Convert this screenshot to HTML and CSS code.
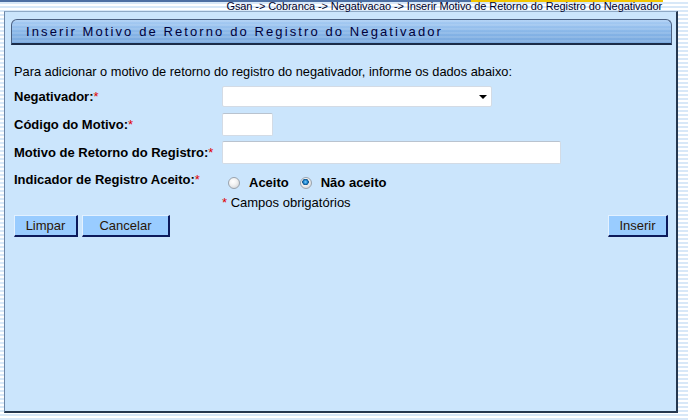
FILE: index.html
```html
<!DOCTYPE html>
<html lang="pt-BR">
<head>
	<meta charset="UTF-8">
	<title>Inserir Motivo de Retorno do Registro do Negativador</title>
	<link rel="stylesheet" href="styles.css">
</head>
<body>
	<div class="topline"><span class="topline__mark"></span></div>
	<div class="crumbs">Gsan -&gt; Cobranca -&gt; Negativacao -&gt; Inserir Motivo de Retorno do Registro do Negativador</div>

	<div class="panel">
		<h1 class="panel__title">Inserir Motivo de Retorno do Registro do Negativador</h1>

		<form class="form" name="main">
			<p class="form__intro">Para adicionar o motivo de retorno do registro do negativador, informe os dados abaixo:</p>

			<div class="form__grid">
				<label class="form__label" for="negativador">Negativador:<span class="req">*</span></label>
				<div class="form__field">
					<div class="select">
						<select class="select__box" id="negativador" name="negativador">
							<option value=""></option>
						</select>
					</div>
				</div>

				<label class="form__label" for="codigo">Código do Motivo:<span class="req">*</span></label>
				<div class="form__field">
					<input class="input input--code" type="text" id="codigo" name="codigo">
				</div>

				<label class="form__label" for="motivo">Motivo de Retorno do Registro:<span class="req">*</span></label>
				<div class="form__field">
					<input class="input input--long" type="text" id="motivo" name="motivo">
				</div>

				<span class="form__label form__label--top">Indicador de Registro Aceito:<span class="req">*</span></span>
				<div class="form__field form__radios">
					<input class="radio" type="radio" name="aceito" id="aceito_s" value="1">
					<label class="radio__text" for="aceito_s">Aceito</label>
					<input class="radio" type="radio" name="aceito" id="aceito_n" value="2" checked>
					<label class="radio__text" for="aceito_n">Não aceito</label>
				</div>

				<span></span>
				<div class="form__note"><span class="req">*</span> Campos obrigatórios</div>
			</div>

			<div class="form__buttons">
				<input class="button button--limpar" type="reset" value="Limpar">
				<input class="button button--cancelar" type="button" value="Cancelar">
				<input class="button button--inserir" type="submit" value="Inserir">
			</div>
		</form>
	</div>
</body>
</html>
```

FILE: styles.css
```css
body {
	margin: 0px;
	font-family: "Liberation Sans", Arial, sans-serif;
	font-size: 12px;
	color: #000000;
	background: repeating-linear-gradient(to bottom, #ffffff 0px, #ffffff 2px, #d8e8f8 2px, #d8e8f8 4px);
	height: 420px;
	overflow: hidden;
}

.topline {
	height: 2px;
	background: #4d6fa3;
	width: 471px;
	position: relative;
}
.topline__mark {
	position: absolute;
	left: 471px;
	top: 0px;
	width: 192px;
	height: 2px;
	background: #f2c400;
}

.crumbs {
	height: 9px;
	line-height: 9px;
	text-align: right;
	padding-right: 26px;
	font-size: 11px;
	letter-spacing: -0.1px;
	color: #00002a;
	white-space: nowrap;
}

.panel {
	box-sizing: border-box;
	width: 674px;
	height: 402px;
	margin-left: 4px;
	background: #cbe5fc;
	border-top: 1px solid #8ea9c6;
	border-left: 1px solid #6d86a6;
	border-right: 2px solid #25374f;
	border-bottom: 2px solid #25374f;
	padding: 7px 4px 0px 6px;
}

.panel__title {
	margin: 0px;
	height: 26px;
	box-sizing: border-box;
	border: 1px solid #4a5f80;
	border-bottom: 2px solid #1c2c48;
	border-radius: 6px 6px 0px 0px;
	background:
		repeating-linear-gradient(to bottom, rgba(255, 255, 255, 0.12) 0px, rgba(255, 255, 255, 0.12) 2px, rgba(0, 0, 0, 0) 2px, rgba(0, 0, 0, 0) 4px),
		linear-gradient(to bottom, #a9cdf4, #84b3e6 60%, #7aa9de);
	font-size: 13px;
	font-weight: normal;
	letter-spacing: 2.1px;
	color: #00003a;
	line-height: 23px;
	padding-left: 14px;
	white-space: nowrap;
}

.form {
	padding: 0px 3px;
}
.form__intro {
	margin: 20px 0px 7px 0px;
	line-height: 14px;
	font-size: 12.8px;
}

.form__grid {
	display: grid;
	grid-template-columns: 208px auto;
	grid-template-rows: 21px 24px 23px 23px 14px;
	row-gap: 5px;
	align-items: center;
}
.form__label {
	font-weight: bold;
	font-size: 13px;
	white-space: nowrap;
}
.form__label--top {
	align-self: start;
	padding-top: 3px;
}
.form__field {
	display: flex;
	align-items: center;
}
.form__note {
	margin-top: -2px;
	font-size: 13px;
	line-height: 14px;
}
.req {
	color: #e00000;
	font-weight: normal;
}

.select {
	position: relative;
	width: 270px;
	height: 21px;
}
.select::after {
	content: "";
	position: absolute;
	right: 5px;
	top: 9px;
	border-left: 4px solid transparent;
	border-right: 4px solid transparent;
	border-top: 4px solid #000000;
}
.select__box {
	appearance: none;
	-webkit-appearance: none;
	width: 100%;
	height: 100%;
	margin: 0px;
	border: 1px solid #d3dbe5;
	border-radius: 2px;
	background: #ffffff;
	font-family: inherit;
	font-size: 12px;
}

.input {
	box-sizing: border-box;
	height: 23px;
	margin: 0px;
	border: 1px solid #d3dbe5;
	border-top-color: #b9c3cf;
	border-radius: 2px;
	background: #ffffff;
	font-family: inherit;
	font-size: 12px;
}
.input--code { width: 51px; }
.input--long { width: 339px; }

.form__radios {
	padding-left: 6px;
	padding-top: 4px;
}
.radio {
	appearance: none;
	-webkit-appearance: none;
	box-sizing: border-box;
	width: 12px;
	height: 12px;
	margin: 0px 9px 0px 0px;
	border: 1px solid #9aa3ad;
	border-radius: 50%;
	background: radial-gradient(circle at 40% 35%, #ffffff 0%, #f2f2f2 40%, #c9ccd0 100%);
}
.radio:checked {
	background:
		radial-gradient(circle at 45% 40%, #7fd0ff 0px, #1a7fc8 2px, #0b4f86 3px, rgba(0, 0, 0, 0) 3.5px),
		radial-gradient(circle at 40% 35%, #ffffff 0%, #f2f2f2 40%, #c9ccd0 100%);
}
.radio__text {
	font-weight: bold;
	font-size: 13px;
	margin-right: 11px;
}

.form__buttons {
	display: flex;
	align-items: center;
	margin-top: 4px;
	padding-right: 1px;
}

.button {
	box-sizing: border-box;
	height: 22px;
	margin: 0px 4px 0px 0px;
	padding: 0px;
	background: #99ccff;
	color: #2a1606;
	font-family: inherit;
	font-size: 13px;
	border-top: 1px solid #e3f1ff;
	border-left: 1px solid #e3f1ff;
	border-right: 2px solid #0c1a5c;
	border-bottom: 2px solid #0c1a5c;
	cursor: pointer;
}
.button--limpar { width: 64px; }
.button--cancelar { width: 88px; }
.button--inserir { width: 60px; margin-left: auto; margin-right: 0px; }
```
